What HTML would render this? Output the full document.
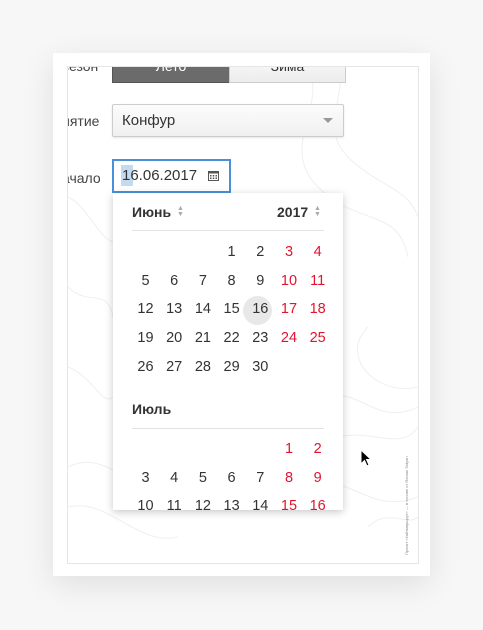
<!DOCTYPE html><html><head><meta charset="utf-8"><style>
body{margin:0;width:483px;height:630px;background:#f7f7f7;position:relative;overflow:hidden;font-family:"Liberation Sans",sans-serif;color:#333}
.sheet{position:absolute;left:53px;top:53px;width:377px;height:523px;background:#fff;box-shadow:0 8px 30px rgba(0,0,0,.10)}
.inner{position:absolute;left:67px;top:66px;width:350px;height:496px;border:1px solid #e6e6e6;background:#fff;overflow:hidden}
.a{position:absolute}
.lbl{font-size:14px;color:#444}
.c{position:absolute;width:29px;text-align:center;font-size:14.5px;line-height:18px;color:#333}
.r{color:#e2142d}
</style></head><body>
<div class="sheet"></div>
<div class="inner">
<svg width="350" height="496" style="position:absolute;left:0;top:0" fill="none" stroke="#efefef" stroke-width="1">
<path d="M240 0c20 40-30 80 10 120s80 20 90 70"/><path d="M270 0c10 30-20 60 10 90s60 30 70 60"/>
<path d="M250 380c40-30 80 10 100-20"/><path d="M230 420c50-20 70 30 120 10"/><path d="M0 400c40-20 60 30 110 20"/>
<path d="M0 440c40-10 70 40 110 30"/><path d="M300 260c-30 30 10 70 50 60"/><path d="M0 130c20 10 30 40 45 45"/>
<path d="M260 330c30-10 50 30 90 10"/><path d="M300 460c20-20 40 0 50-10"/><path d="M0 220c20 20 40 0 45 30"/><path d="M0 300c25 10 35 40 45 30"/>
</svg>
<div class="a lbl" style="left:-6px;top:-9px">сезон</div>
<div class="a lbl" style="left:-6px;top:46px">иятие</div>
<div class="a lbl" style="left:-6px;top:103px">ачало</div>
<div class="a" style="left:44px;top:-10px;width:116px;height:24px;background:#6b6b6b;border:1px solid #555;color:#fff;text-align:center;font-size:14px;line-height:16px">Лето</div>
<div class="a" style="left:161px;top:-10px;width:115px;height:24px;background:linear-gradient(#fafafa,#ececec);border:1px solid #ccc;text-align:center;font-size:14px;line-height:16px">Зима</div>
<div class="a" style="left:44px;top:37px;width:230px;height:31px;background:linear-gradient(#fcfcfc,#f0f0f0);border:1px solid #ccc;border-radius:2px;box-shadow:0 1px 2px rgba(0,0,0,.1)">
<div class="a" style="left:9px;top:7px;font-size:15px">Конфур</div>
<div class="a" style="right:10px;top:13px;width:0;height:0;border-left:5px solid transparent;border-right:5px solid transparent;border-top:5px solid #999"></div></div>
<div class="a" style="left:44px;top:92px;width:115px;height:30px;border:2px solid #4a90d9;background:#fff">
<div class="a" style="left:7px;top:4px;width:12px;height:21px;background:#c4daf3"></div>
<div class="a" style="left:8px;top:6px;font-size:15px">16.06.2017</div>
<svg class="a" style="left:94px;top:9px" width="11" height="11" viewBox="0 0 11 11"><rect x="0.5" y="1.5" width="10" height="9" fill="none" stroke="#555"/><rect x="0" y="1" width="11" height="2.5" fill="#555"/><g fill="#555"><rect x="2" y="5" width="1.5" height="1.5"/><rect x="4.75" y="5" width="1.5" height="1.5"/><rect x="7.5" y="5" width="1.5" height="1.5"/><rect x="2" y="7.5" width="1.5" height="1.5"/><rect x="4.75" y="7.5" width="1.5" height="1.5"/><rect x="7.5" y="7.5" width="1.5" height="1.5"/></g></svg>
</div>
</div>
<div class="a" style="left:113px;top:193px;width:230px;height:317px;background:#fff;box-shadow:0 2px 8px rgba(0,0,0,.22);overflow:hidden">
<div class="a" style="left:19px;top:11px;font-size:14px;font-weight:bold">Июнь</div>
<div class="a" style="left:64px;top:13px;font-size:7px;color:#aaa;line-height:6px">▲<br>▼</div>
<div class="a" style="left:164px;top:11px;font-size:14px;font-weight:bold">2017</div>
<div class="a" style="left:201px;top:13px;font-size:7px;color:#aaa;line-height:6px">▲<br>▼</div>
<div class="a" style="left:19px;top:37px;width:192px;height:1px;background:#e2e2e2"></div>
<div class="a" style="left:130px;top:103px;width:29px;height:29px;border-radius:50%;background:#e8e8e8"></div>
<div class="a" style="left:19px;top:208px;font-size:14px;font-weight:bold">Июль</div>
<div class="a" style="left:19px;top:235px;width:192px;height:1px;background:#e2e2e2"></div>
<div id="g"></div>
</div>
<svg class="a" style="left:360px;top:449px" width="12" height="18" viewBox="0 0 12 18"><path d="M1 1v14l3.5-3.5 2.5 5.5 2-1-2.5-5.5H11z" fill="#000" stroke="#fff" stroke-width="1"/></svg>
<div class="a" style="left:404px;font-size:4px;color:#888;transform:rotate(-90deg);transform-origin:left top;white-space:nowrap;top:555px">Проект «Кайтмаршрут» — в основе от Roman Sidyan</div>
<script>
var g=document.getElementById('g'),h='';
function cell(d,col,row,base){var x=18+col*28.7,y=base+row*28.7;h+='<div class="c'+(col>4?' r':'')+'" style="left:'+x+'px;top:'+y+'px">'+d+'</div>';}
for(var d=1;d<=30;d++){var p=d+2;cell(d,p%7,Math.floor(p/7),50);}
for(var d=1;d<=16;d++){var p=d+4;cell(d,p%7,Math.floor(p/7),247);}
g.innerHTML=h;
</script>
</body></html>
